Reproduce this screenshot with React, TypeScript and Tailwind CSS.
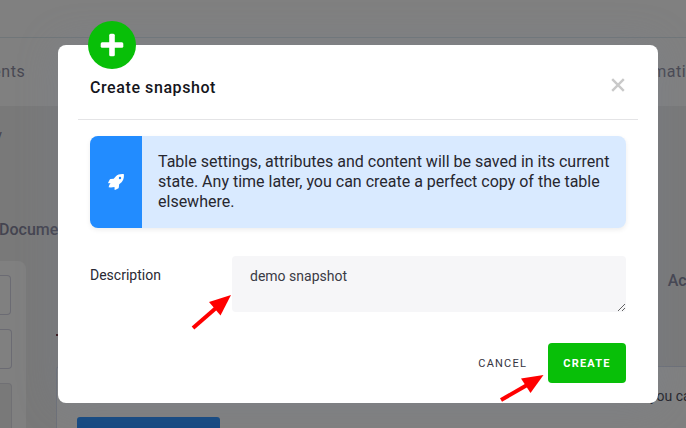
function Backdrop() {
  return (
    <div className="flex h-full flex-col bg-[#797979] text-[#444450]">
      <header className="h-[38px] shrink-0 border-b border-[#707679] bg-[#808080]" />
      <nav className="flex h-[68px] shrink-0 items-center justify-between bg-[#808080] text-base tracking-[0.5px] text-[#484852]">
        <span className="-ml-[61px]">Documents</span>
        <span className="-mr-[19px] whitespace-nowrap">Automation</span>
      </nav>
      <div className="flex min-h-0 flex-1">
        <aside className="flex w-[26px] shrink-0 flex-col">
          <span className="mt-[19px] -ml-[33px] h-5 text-sm leading-5">Entity</span>
          <span className="mt-[75px] -ml-px h-5 text-base leading-5 font-medium whitespace-nowrap">Document</span>
          <div className="mt-[21px] flex flex-1 flex-col rounded-tr-lg bg-[#808080] pt-[14px]">
            <div className="h-10 w-[11px] rounded-r border border-l-0 border-[#6b6b73]" />
            <div className="mt-[14px] h-10 w-3 rounded-r border border-l-0 border-[#6b6b73]" />
            <div className="mt-[14px] w-3 flex-1 rounded-tr border-t border-r border-[#707074] bg-[#797979]" />
          </div>
        </aside>
        <main className="ml-[30px] flex min-w-0 flex-1 flex-col">
          <div className="mt-[165px] -mr-[28px] h-5 text-right text-base leading-5 font-medium whitespace-nowrap">Action</div>
          <div className="mt-[43px] h-[2px] w-1 bg-[#300c10]" />
          <div className="mt-[30px] flex flex-1 flex-col overflow-hidden rounded-tl border-t border-l border-[#6d7078] bg-[#808080]">
            <div className="mt-[19px] h-5 text-sm leading-5 whitespace-nowrap text-[#25252c]">
              <p className="pl-[593px]">you can</p>
            </div>
            <div className="mt-[11px] ml-5 w-[143px] flex-1 rounded-t-[3px] bg-[#144982]" />
          </div>
        </main>
      </div>
    </div>
  );
}

function RocketIcon() {
  return (
    <svg className="h-4 w-4" viewBox="0 0 16 16" fill="white">
      <path
        fillRule="evenodd"
        d="M15.5 0.1C12 -0.1 9.6 0.6 7.7 2.4L5.7 4.8 2.6 5.1C2.1 5.2 1.8 5.5 1.5 5.9L0.2 8.5C0 9 0.3 9.3 0.8 9.3L2.6 9.3 1.4 10.7 0.6 13.2 2.9 13.4 6.5 13 6.6 15.4C6.6 15.9 7 16.1 7.5 15.8L10 14.5C10.4 14.3 10.7 13.9 10.8 13.4L11.2 10.3 13.6 8.3C15.4 6.4 16.1 4 15.9 0.5ZM12 2.8A1.2 1.2 0 1 1 12 5.2 1.2 1.2 0 1 1 12 2.8Z"
      />
    </svg>
  );
}

function Dialog() {
  return (
    <section className="flex h-[358px] w-[600px] flex-col rounded-[8px] bg-white px-5 shadow-[0_0_40px_rgba(118,130,150,0.3)]">
      <header className="flex h-[75px] shrink-0 items-start justify-between border-b border-[#e4e4e6] px-3 pt-[30px]">
        <h1 className="mt-px text-base leading-6 font-medium tracking-[0.58px] text-[#15151b]">Create snapshot</h1>
        <svg className="mt-[3px] mr-px h-[14px] w-[14px]" viewBox="0 0 14 14" stroke="#c9c9c9" strokeWidth="2.4" fill="none">
          <path d="M1.2 1.2 12.8 12.8M12.8 1.2 1.2 12.8" />
        </svg>
      </header>
      <div className="mx-3 mt-4 flex h-[92px] shrink-0 overflow-hidden rounded-[8px] bg-[#d9eaff] shadow-[0_2px_5px_rgba(0,0,0,0.07)]">
        <div className="flex w-[52px] shrink-0 items-center justify-center bg-[#228cff]">
          <RocketIcon />
        </div>
        <p className="pt-4 pl-4 text-base leading-5 whitespace-nowrap text-[#27272f]">
          Table settings, attributes and content will be saved in its current
          <br />
          state. Any time later, you can create a perfect copy of the table
          <br />
          elsewhere.
        </p>
      </div>
      <div className="mx-3 mt-7 flex h-14 shrink-0">
        <label className="w-[142px] pt-[9px] text-sm leading-5 text-[#292933]">Description</label>
        <textarea
          readOnly
          defaultValue="demo snapshot"
          className="h-14 flex-1 resize overflow-hidden rounded bg-[#f6f6f8] px-[18px] pt-[10px] text-sm leading-5 text-[#3a3a45] outline-none"
        />
      </div>
      <footer className="mx-3 mt-[31px] flex h-10 shrink-0 items-center justify-end text-[11px] tracking-[1.2px]">
        <button className="mr-[21px] pt-0.5 text-[#343440]">CANCEL</button>
        <button className="h-10 w-[78px] rounded bg-[#08bf08] pt-0.5 font-bold text-white">CREATE</button>
      </footer>
    </section>
  );
}

function Arrow({ shaft, head }: { shaft: string; head: string }) {
  return (
    <>
      <path d={shaft} stroke="#ff0000" strokeWidth="4" />
      <path d={head} fill="#ff0000" />
    </>
  );
}

export default function App() {
  return (
    <div className="relative h-[428px] w-[686px] overflow-hidden font-['Roboto',sans-serif]">
      <Backdrop />
      <div className="absolute inset-0 pt-[45px] pl-[58px]">
        <Dialog />
      </div>
      <div className="absolute top-[21px] left-[88px] flex h-12 w-12 items-center justify-center rounded-full bg-[#08bf08]">
        <svg className="h-6 w-6" viewBox="0 0 24 24" fill="white">
          <rect x="9.2" y="0.7" width="5.6" height="22.6" rx="1.5" />
          <rect x="0.7" y="9.2" width="22.6" height="5.6" rx="1.5" />
        </svg>
      </div>
      <svg className="pointer-events-none absolute inset-0 h-full w-full" viewBox="0 0 686 428" fill="none">
        <Arrow shaft="M193 328 216 308" head="M231 295 209 302 220.5 315.5Z" />
        <Arrow shaft="M501 400 528 384.5" head="M543.5 375 521 378.5 530.5 393Z" />
      </svg>
    </div>
  );
}
